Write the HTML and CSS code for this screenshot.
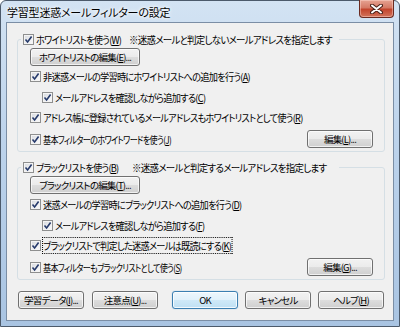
FILE: index.html
```html
<!DOCTYPE html>
<html lang="ja">
<head>
  <meta charset="UTF-8" />
  <title>学習型迷惑メールフィルターの設定</title>
  <link rel="stylesheet" href="styles.css">
</head>
<body>
  <div class="window">
    <div class="titlebar">
      <span class="title">学習型迷惑メールフィルターの設定</span>
      <div class="close">
        <svg width="13" height="10" viewBox="0 0 13 10">
          <path d="M2 1.5 L11 8.5 M11 1.5 L2 8.5" stroke="#4a2018" stroke-width="4" stroke-linecap="round"/>
          <path d="M2 1.5 L11 8.5 M11 1.5 L2 8.5" stroke="#fff" stroke-width="2" stroke-linecap="round"/>
        </svg>
      </div>
    </div>

    <div class="client">
      <!-- ホワイトリスト -->
      <div class="group">
        <div class="group-head">
          <label class="check head-check"><span class="box"><svg width="9" height="9" viewBox="0 0 9 9"><path d="M1.5 4.5 L3.6 7 L7.6 1.5" /></svg></span><span class="txt">ホワイトリストを使う(<u>W</u>)</span></label>
          <span class="txt note">※迷惑メールと判定しないメールアドレスを指定します</span>
        </div>
        <div class="btn-row"><button class="btn wide">ホワイトリストの編集(<u>E</u>)...</button></div>
        <div class="row"><label class="check"><span class="box"><svg width="9" height="9" viewBox="0 0 9 9"><path d="M1.5 4.5 L3.6 7 L7.6 1.5" /></svg></span><span class="txt">非迷惑メールの学習時にホワイトリストへの追加を行う(<u>A</u>)</span></label></div>
        <div class="row sub"><label class="check"><span class="box"><svg width="9" height="9" viewBox="0 0 9 9"><path d="M1.5 4.5 L3.6 7 L7.6 1.5" /></svg></span><span class="txt">メールアドレスを確認しながら追加する(<u>C</u>)</span></label></div>
        <div class="row"><label class="check"><span class="box"><svg width="9" height="9" viewBox="0 0 9 9"><path d="M1.5 4.5 L3.6 7 L7.6 1.5" /></svg></span><span class="txt">アドレス帳に登録されているメールアドレスもホワイトリストとして使う(<u>R</u>)</span></label></div>
        <div class="row last">
          <label class="check"><span class="box"><svg width="9" height="9" viewBox="0 0 9 9"><path d="M1.5 4.5 L3.6 7 L7.6 1.5" /></svg></span><span class="txt narrow">基本フィルターのホワイトワードを使う(<u>J</u>)</span></label>
          <button class="btn">編集(<u>L</u>)...</button>
        </div>
      </div>

      <!-- ブラックリスト -->
      <div class="group">
        <div class="group-head">
          <label class="check head-check"><span class="box"><svg width="9" height="9" viewBox="0 0 9 9"><path d="M1.5 4.5 L3.6 7 L7.6 1.5" /></svg></span><span class="txt">ブラックリストを使う(<u>B</u>)</span></label>
          <span class="txt note">※迷惑メールと判定するメールアドレスを指定します</span>
        </div>
        <div class="btn-row"><button class="btn wide">ブラックリストの編集(<u>T</u>)...</button></div>
        <div class="row"><label class="check"><span class="box"><svg width="9" height="9" viewBox="0 0 9 9"><path d="M1.5 4.5 L3.6 7 L7.6 1.5" /></svg></span><span class="txt">迷惑メールの学習時にブラックリストへの追加を行う(<u>D</u>)</span></label></div>
        <div class="row sub"><label class="check"><span class="box"><svg width="9" height="9" viewBox="0 0 9 9"><path d="M1.5 4.5 L3.6 7 L7.6 1.5" /></svg></span><span class="txt">メールアドレスを確認しながら追加する(<u>F</u>)</span></label></div>
        <div class="row"><label class="check"><span class="box"><svg width="9" height="9" viewBox="0 0 9 9"><path d="M1.5 4.5 L3.6 7 L7.6 1.5" /></svg></span><span class="txt focus">ブラックリストで判定した迷惑メールは既読にする(<u>K</u>)</span></label></div>
        <div class="row last">
          <label class="check"><span class="box"><svg width="9" height="9" viewBox="0 0 9 9"><path d="M1.5 4.5 L3.6 7 L7.6 1.5" /></svg></span><span class="txt narrow">基本フィルターもブラックリストとして使う(<u>S</u>)</span></label>
          <button class="btn">編集(<u>G</u>)...</button>
        </div>
      </div>

      <div class="footer">
        <div class="btn-group">
          <button class="btn">学習データ(<u>I</u>)...</button>
          <button class="btn">注意点(<u>U</u>)...</button>
        </div>
        <div class="btn-group right">
          <button class="btn default">OK</button>
          <button class="btn">キャンセル</button>
          <button class="btn">ヘルプ(<u>H</u>)</button>
        </div>
      </div>
    </div>
  </div>
</body>
</html>
```

FILE: styles.css
```css
* {
  box-sizing: border-box;
}

body {
  margin: 0;
  font-family: "Noto Sans CJK JP", "Noto Sans", sans-serif;
  font-size: 10px;
  font-feature-settings: "palt";
  color: #000;
  background: #fff;
}

.window {
  position: relative;
  width: 400px;
  height: 327px;
  border: 1px solid #4c5a6b;
  border-radius: 6px 6px 0 0;
  background: linear-gradient(180deg, #d3e3f3 0%, #bed4ec 40%, #a9c4e2 100%);
  display: flex;
  flex-direction: column;
}

.titlebar {
  height: 21px;
  padding-left: 6px;
  display: flex;
  align-items: center;
  flex-shrink: 0;
}

.title {
  font-size: 11px;
  letter-spacing: -0.2px;
  text-shadow: 0 0 5px #fff, 0 0 3px #fff;
}

.close {
  position: absolute;
  top: -1px;
  right: 5px;
  width: 35px;
  height: 18px;
  border: 1px solid #6a2a20;
  border-top: none;
  border-radius: 0 0 4px 4px;
  background: linear-gradient(180deg, #e6a392 0%, #d57a66 45%, #c3452d 55%, #d2735a 100%);
  box-shadow: inset 0 0 0 1px rgba(255, 220, 210, 0.45);
  display: flex;
  align-items: center;
  justify-content: center;
}

.client {
  flex: 1;
  margin: 0 5px 5px 5px;
  border: 1px solid #7b8ea5;
  background: #f0f0f0;
  display: flex;
  flex-direction: column;
}

.group {
  margin: 16px 8px 0 10px;
  padding: 0 11px 2px 12px;
  border: 1px solid #d5dfe5;
  border-radius: 3px;
}

.group + .group {
  margin-top: 15px;
}

.group-head {
  display: flex;
  align-items: center;
  width: 318px;
  height: 16px;
  margin: -9px 0 0 -9px;
  padding: 0 3px 0 2px;
  background: #f0f0f0;
}

.head-check {
  width: 111px;
}

.btn-row {
  margin-top: 1px;
}

.row {
  display: flex;
  align-items: center;
  height: 20px;
}

.row + .row {
  margin-top: 1px;
}

.row.sub {
  padding-left: 12px;
}

.row.sub + .row {
  margin-top: 0;
}

.row.last {
  margin-top: 2px;
  justify-content: space-between;
}

.check {
  display: flex;
  align-items: center;
  white-space: nowrap;
}

/* MS UI Gothic の細い仮名幅に合わせて横方向を詰める */
.txt {
  display: inline-block;
  white-space: nowrap;
  letter-spacing: -0.8px;
  transform: scaleX(0.92);
  transform-origin: 0 50%;
}

.txt.note {
  transform: scaleX(0.95);
}

.txt.narrow {
  transform: scaleX(0.81);
}

.box {
  width: 11px;
  height: 11px;
  margin-right: 2px;
  flex-shrink: 0;
  border: 1px solid #8e8f8f;
  background: linear-gradient(135deg, #d6d9de 0%, #eeeff1 60%, #fbfbfb 100%);
  box-shadow: inset 0 0 0 1px #f4f4f4;
  display: flex;
  align-items: center;
  justify-content: center;
}

.box svg path {
  fill: none;
  stroke: #263a6b;
  stroke-width: 1.6;
}

.focus {
  outline: 1px dotted #000;
  outline-offset: 0;
}

u {
  text-decoration-thickness: 1px;
  text-underline-offset: 1px;
}

.btn {
  width: 66px;
  height: 18px;
  padding: 0;
  font-family: inherit;
  font-size: 9.5px;
  font-feature-settings: "palt";
  letter-spacing: -0.8px;
  color: #000;
  border: 1px solid #707070;
  border-radius: 3px;
  background: linear-gradient(180deg, #f2f2f2 0%, #ebebeb 50%, #dddddd 51%, #cfcfcf 100%);
  box-shadow: inset 0 0 0 1px rgba(255, 255, 255, 0.7);
  white-space: nowrap;
}

.btn.wide {
  width: 110px;
}

.btn.default {
  border-color: #3c7fb1;
  background: linear-gradient(180deg, #eef7fd 0%, #e1f1fb 50%, #cfe9f8 51%, #bfe0f4 100%);
  box-shadow: inset 0 0 0 1px rgba(255, 255, 255, 0.8), 0 0 1px #6fb4e6;
}

.footer {
  display: flex;
  justify-content: space-between;
  margin-top: 11px;
  padding: 0 9px 0 11px;
}

.btn-group {
  display: flex;
  gap: 8px;
}

.btn-group.right {
  gap: 7px;
}
```
